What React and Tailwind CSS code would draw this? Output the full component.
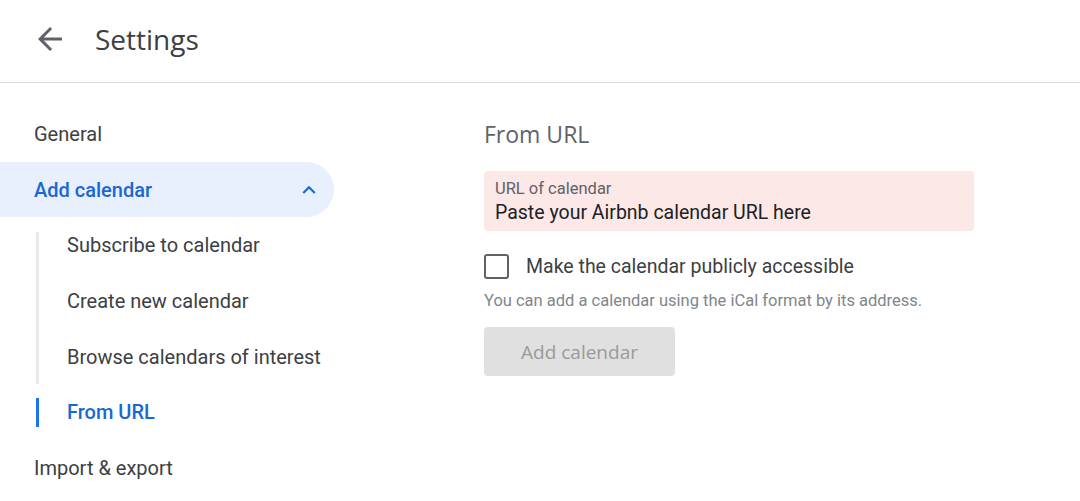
import React from "react";

const SubItem = ({ label, active, first }) => (
  <div className="relative flex h-[55.7px] items-center pl-[67px]">
    <div
      className={
        "absolute left-[36px] w-[3px] " +
        (active
          ? "top-[14px] bottom-[13px] bg-[#1a73e8]"
          : first
          ? "top-[15px] bottom-0 bg-[#e8eaed]"
          : "top-0 bottom-0 bg-[#e8eaed]")
      }
    />
    <span className={active ? "text-[#1967d2] font-medium" : "text-[#3c4043]"}>{label}</span>
  </div>
);

const App = () => {
  return (
    <div className="w-[1080px] h-[501px] overflow-hidden bg-white font-['Roboto',sans-serif]">
      {/* Header */}
      <div className="flex h-[83px] items-center border-b border-[#dadce0]">
        <button className="ml-[32px] -mt-[5px] flex h-9 w-9 items-center justify-center text-[#5f6368]">
          <svg width="36" height="36" viewBox="0 0 24 24" fill="currentColor">
            <path d="M20 11H7.83l5.59-5.59L12 4l-8 8 8 8 1.41-1.41L7.83 13H20v-2z" />
          </svg>
        </button>
        <h1 className="ml-[27px] -mt-[4px] text-[28px] text-[#3c4043] font-['Open_Sans',sans-serif]">
          Settings
        </h1>
      </div>

      <div className="flex">
        {/* Sidebar */}
        <nav className="w-[334px] pt-[23px] text-[20px]">
          <div className="flex h-[55.7px] items-center pl-[34px] text-[#3c4043]">General</div>
          <div className="flex h-[55.7px] items-center justify-between rounded-r-full bg-[#e8f0fe] pl-[34px] pr-[12px] font-medium text-[#1967d2]">
            <span>Add calendar</span>
            <svg width="26" height="26" viewBox="0 0 24 24" fill="currentColor">
              <path d="M7.41 15.41L12 10.83l4.59 4.58L18 14l-6-6-6 6z" />
            </svg>
          </div>
          <div>
            <SubItem label="Subscribe to calendar" first />
            <SubItem label="Create new calendar" />
            <SubItem label="Browse calendars of interest" />
            <SubItem label="From URL" active />
          </div>
          <div className="flex h-[55.7px] items-center pl-[34px] text-[#3c4043]">Import &amp; export</div>
        </nav>

        {/* Content */}
        <main className="ml-[150px] w-[490px] pt-[36px]">
          <h2 className="text-[23px] leading-[30px] text-[#5f6368] font-['Open_Sans',sans-serif]">From URL</h2>
          <div className="mt-[22px] h-[60px] rounded-[4px] bg-[#fce8e6] px-[11px] pt-[8px]">
            <div className="text-[16.5px] leading-[20px] text-[#5f6368]">URL of calendar</div>
            <div className="mt-[2px] text-[19.5px] leading-[24px] text-[#202124]">
              Paste your Airbnb calendar URL here
            </div>
          </div>
          <label className="mt-[21px] flex items-center">
            <span className="h-[25px] w-[25px] rounded-[3px] border-[2px] border-[#5f6368]" />
            <span className="ml-[17px] text-[19.5px] text-[#3c4043]">Make the calendar publicly accessible</span>
          </label>
          <p className="mt-[8px] text-[16.5px] leading-[24px] text-[#80868b]">
            You can add a calendar using the iCal format by its address.
          </p>
          <button className="mt-[14px] h-[49px] w-[191px] rounded-[4px] bg-[#e0e0e0] text-[19px] font-medium text-[#9a9a9a] font-['Open_Sans',sans-serif]">
            Add calendar
          </button>
        </main>
      </div>
    </div>
  );
};

export default App;
